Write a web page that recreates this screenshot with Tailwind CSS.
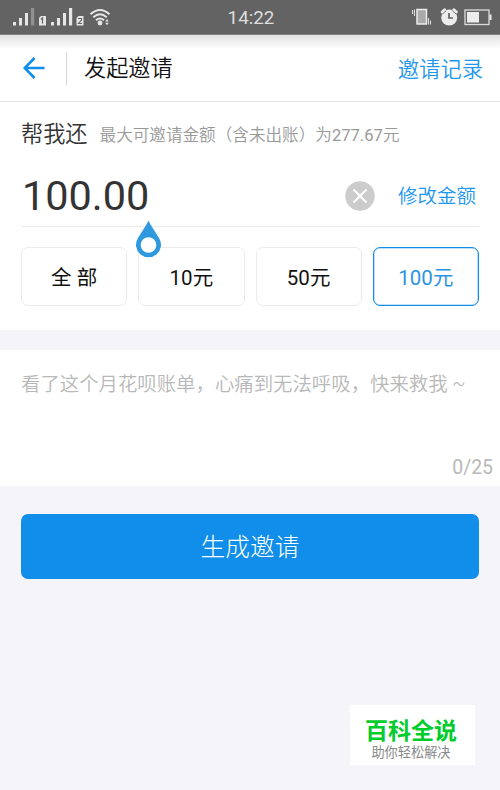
<!DOCTYPE html>
<html lang="zh-CN">
<head>
  <meta charset="UTF-8">
  <meta name="viewport" content="width=device-width, initial-scale=1.0">
  <title>发起邀请</title>
  <script src="https://cdn.jsdelivr.net/npm/@tailwindcss/browser@4"></script>
</head>
<body class="relative flex h-[790px] w-[500px] flex-col overflow-hidden bg-[#f4f4f9] font-[Roboto,'Noto_Sans_CJK_SC',sans-serif]">
  <!-- Status bar -->
  <div class="flex h-[35px] shrink-0 items-center justify-between border-b border-[#858585] bg-[#636363]">
    <svg class="h-[34px] w-[130px]" viewBox="0 0 130 34" fill="#e6e6e6">
      <rect x="13" y="22" width="3" height="3.5"/>
      <rect x="19" y="18" width="3" height="7.5"/>
      <rect x="25" y="13" width="3" height="12.5"/>
      <rect x="31" y="8" width="3.2" height="17.5" fill="#929292"/>
      <path d="M41 16h5v9.5h-7v-7.5z"/>
      <path d="M41 19.500l1.500-1.500v5.500" fill="none" stroke="#636363" stroke-width="1.2"/>
      <rect x="51" y="22" width="3" height="3.5"/>
      <rect x="57" y="18" width="3" height="7.5"/>
      <rect x="63" y="13" width="3" height="12.5"/>
      <rect x="69" y="8" width="3.2" height="17.5"/>
      <path d="M78.500 16h5v9.5h-7v-7.5z"/>
      <path d="M78 18.500h3.500v1.500l-3 3.500h3.500" fill="none" stroke="#636363" stroke-width="1.100"/>
      <g fill="none" stroke="#e6e6e6" stroke-width="2">
        <path d="M90.500 14.200q9.500-8.500 19 0"/>
        <path d="M93.300 17.300q6.700-6 13.400 0"/>
        <path d="M96 20.200q4-3.400 8 0"/>
      </g>
      <circle cx="100" cy="23" r="2.400"/>
      <path d="M105.300 21.500l1.700-2.500 1.700 2.500zM105.300 22.800h3.400l-1.700 2.500z"/>
    </svg>
    <span class="pt-[3px] pl-[2px] text-[18.8px] text-[#dedede]">14:22</span>
    <svg class="h-[34px] w-[130px]" viewBox="370 0 130 34" fill="#ececec">
      <path d="M417 9.500h9.500v14.500h-9.500z" fill="#aaa" stroke="#ececec" stroke-width="1.5"/>
      <path d="M412.500 10v4M414.500 9.500v6.500M428.500 18v6.500M430.500 20.500v4" fill="none" stroke="#dcdcdc" stroke-width="1.100"/>
      <circle cx="449.200" cy="17.500" r="8"/>
      <path d="M442 12l2.800-2.400M456.500 12l-2.800-2.400" stroke="#ececec" stroke-width="2.600" stroke-linecap="round"/>
      <path d="M442.500 14l3.700-3.300M456 14l-3.700-3.300" stroke="#636363" stroke-width=".8"/>
      <path d="M449 13v5h4" fill="none" stroke="#636363" stroke-width="1.700"/>
      <rect x="465" y="10" width="24" height="14.500" fill="none" stroke="#dcdcdc" stroke-width="1.300"/>
      <rect x="467" y="12" width="12" height="10.500"/>
      <rect x="489.500" y="14.500" width="2" height="5.500"/>
    </svg>
  </div>

  <!-- Header -->
  <header class="flex h-[67px] shrink-0 items-center border-b border-[#e4e4e6] bg-linear-to-b from-[#e2e2e2] to-white to-[14px] pr-[17px] pl-[23px]">
    <svg class="h-[22px] w-[22px]" viewBox="0 0 22 22" fill="none" stroke="#108ee9" stroke-width="2.600">
      <path d="M21.500 11H2M11.500 1L1.700 11l9.800 10"/>
    </svg>
    <span class="ml-[21px] h-[33px] w-px bg-[#d8d8d8]"></span>
    <h1 class="ml-[17px] pt-[2px] text-[22.2px] font-[350] text-[#111]">发起邀请</h1>
    <a class="ml-auto pt-[3px] text-[21.3px] font-[350] text-[#2196ee]">邀请记录</a>
  </header>

  <!-- Amount -->
  <section class="h-[228px] shrink-0 bg-white px-[21px]">
    <div class="flex h-[62px] items-center pt-[3px]">
      <span class="text-[22.2px] font-[350] text-[#333]">帮我还</span>
      <span class="ml-3 pt-[3px] whitespace-nowrap text-[16.6px] font-[350] text-[#999]">最大可邀请金额（含未出账）为<span class="font-normal">277.67</span>元</span>
    </div>
    <div class="flex h-[63px] items-center border-b border-[#ececee]">
      <span class="pt-[2px] pl-px text-[41.4px] text-[#333]">100.00</span>
      <svg class="mt-[2px] ml-auto h-[30px] w-[30px]" viewBox="0 0 30 30">
        <circle cx="15" cy="15" r="14.700" fill="#ccc"/>
        <path d="M8.500 8.500l13 13M21.500 8.500l-13 13" stroke="#fff" stroke-width="2"/>
      </svg>
      <a class="mt-[3px] mr-[3px] ml-[23px] text-[19.5px] font-[350] text-[#2196ee]">修改金额</a>
    </div>
    <div class="mt-[20px] grid grid-cols-4 gap-[11px] text-[20.5px] text-[#111]">
      <button class="h-[59px] rounded-[7px] border border-[#ebebeb] pt-[3px]">全 部</button>
      <button class="h-[59px] rounded-[7px] border border-[#ebebeb] pt-[3px]">10元</button>
      <button class="h-[59px] rounded-[7px] border border-[#ebebeb] pt-[3px]">50元</button>
      <button class="h-[59px] rounded-[7px] border-[1.5px] border-[#108ee9] pt-[4px] text-[#2a94e4] shadow-[inset_0_0_0_0.5px_#7fc0f2]">100元</button>
    </div>
  </section>

  <!-- Message -->
  <section class="mt-5 flex h-[136px] shrink-0 flex-col justify-between bg-white pt-[20px] pr-[7px] pb-[4px] pl-[21px] text-[19.4px] text-[#b8b8b8]">
    <p class="whitespace-nowrap font-[350]">看了这个月花呗账单，心痛到无法呼吸，快来救我 <span class="relative -top-px">~</span></p>
    <p class="text-right">0/25</p>
  </section>

  <button class="mx-[21px] mt-[28px] h-[65px] shrink-0 rounded-[7px] bg-[#108ee9] pt-[3px] text-[24.7px] font-light text-white">生成邀请</button>

  <!-- Text cursor handle -->
  <svg class="absolute top-[220px] left-[135px] h-[38px] w-[27px]" viewBox="0 0 27 38">
    <path d="M13.500 .5C11 6 5.500 13.500 3 18A12.500 12.500 0 1 0 24 18C21.500 13.500 16 6 13.500 .5z" fill="#2f99e0"/>
    <circle cx="13.500" cy="25" r="7.800" fill="#fff"/>
  </svg>

  <!-- Site badge -->
  <div class="absolute top-[705px] left-[350px] flex h-[60px] w-[125px] flex-col items-center bg-white pt-[14px] pr-[3px]">
    <span class="text-[23px] leading-[25px] font-bold text-[#00cc2c]">百科全说</span>
    <span class="text-[13.2px] leading-[17px] text-[#888]">助你轻松解决</span>
  </div>
</body>
</html>
